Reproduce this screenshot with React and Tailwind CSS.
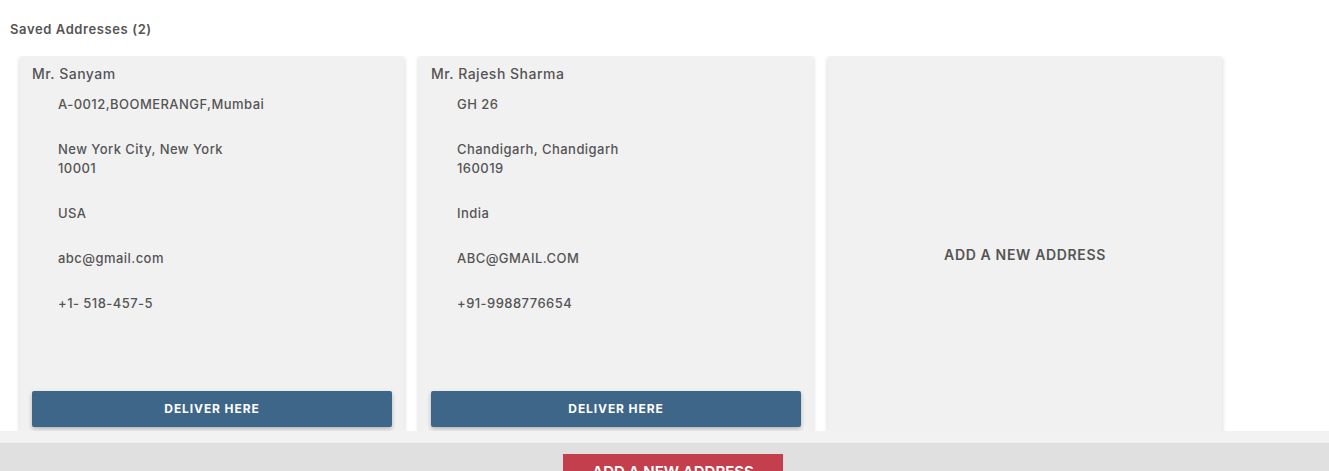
const addresses = [
  {
    name: 'Mr. Sanyam',
    width: 'w-[384px]',
    lines: [['A-0012,BOOMERANGF,Mumbai'], ['New York City, New York', '10001'], ['USA'], ['abc@gmail.com'], ['+1- 518-457-5']],
  },
  {
    name: 'Mr. Rajesh Sharma',
    width: 'w-[394px]',
    lines: [['GH 26'], ['Chandigarh, Chandigarh', '160019'], ['India'], ['ABC@GMAIL.COM'], ['+91-9988776654']],
  },
]

function AddressCard({ item }) {
  return (
    <div className={`${item.width} flex h-[384px] shrink-0 flex-col rounded-[3px] bg-[#f1f1f1] px-3 pt-[8px] pb-[13px] shadow-[0_1px_5px_rgba(0,0,0,0.18)]`}>
      <p className="text-[14px] leading-[20px] font-medium tracking-[0.5px] text-[#555]">{item.name}</p>
      <div className="mt-[11px] pl-[26px] text-[13px] leading-[19px] font-medium tracking-[0.45px] text-[#555]">
        {item.lines.map((group, i) => (
          <div key={i} className="mb-[26px]">
            {group.map((l) => (
              <p key={l}>{l}</p>
            ))}
          </div>
        ))}
      </div>
      <div className="mt-auto">
        <button
          type="button"
          className="h-[36px] w-full rounded-[2px] bg-[#3d6689] text-[12px] font-bold tracking-[0.9px] text-white shadow-[0_2px_4px_rgba(0,0,0,0.25)]"
        >
          DELIVER HERE
        </button>
      </div>
    </div>
  )
}

export default function App() {
  return (
    <div className="flex h-[471px] flex-col overflow-hidden bg-white font-['Inter',sans-serif]">
      <div className="shrink-0 px-[10px] pt-[19px] pb-[17px]">
        <h2 className="text-[13px] leading-[20px] font-semibold tracking-[0.6px] text-[#555]">Saved Addresses (2)</h2>
      </div>

      {/* cards run on below the footer */}
      <div className="flex h-[375px] shrink-0 gap-[15px] overflow-hidden pl-[20px]">
        {addresses.map((a) => (
          <AddressCard key={a.name} item={a} />
        ))}
        <div className="flex h-[384px] w-[394px] shrink-0 items-center justify-center rounded-[3px] bg-[#f1f1f1] pt-[12px] shadow-[0_1px_5px_rgba(0,0,0,0.18)]">
          <p className="text-[14px] font-semibold tracking-[0.65px] text-[#555]">ADD A NEW ADDRESS</p>
        </div>
      </div>

      <div className="h-[12px] shrink-0 bg-[#f2f2f2]" />
      <div className="flex flex-1 items-start justify-center bg-[#e0e0e0] pt-[11px]">
        <button type="button" className="ml-[17px] w-[220px] bg-[#c33f4e] pt-[8px] pb-[12px] text-[15px] leading-[20px] font-semibold text-white">
          ADD A NEW ADDRESS
        </button>
      </div>
    </div>
  )
}
